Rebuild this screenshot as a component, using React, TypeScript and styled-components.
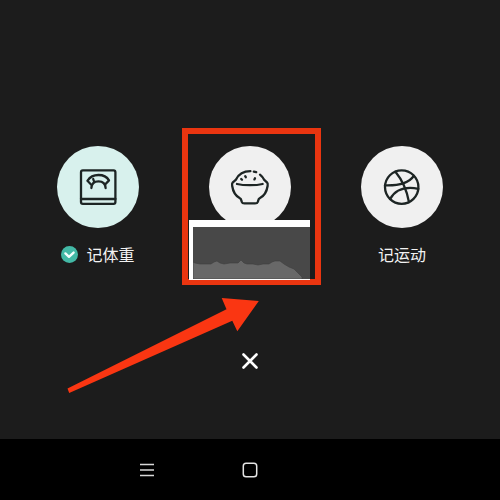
import React from "react";
import styled, { createGlobalStyle } from "styled-components";

const GlobalStyle = createGlobalStyle`
  * { box-sizing: border-box; }
  body {
    margin: 0;
    background: #1c1c1c;
    font-family: "Noto Sans CJK SC", "Noto Sans", sans-serif;
  }
  button {
    margin: 0;
    padding: 0;
    border: 0;
    background: none;
    color: inherit;
    font: inherit;
    cursor: pointer;
  }
  svg { display: block; }
`;

const Screen = styled.div`
  display: flex;
  flex-direction: column;
  min-height: 100vh;
  background: #1c1c1c;
  color: #f2f2f2;
`;

const Content = styled.main`
  flex: 1;
  display: flex;
  flex-direction: column;
  align-items: center;
  gap: 80px;
  padding: 146px 22px 60px;
`;

const Actions = styled.div`
  position: relative;
  display: grid;
  grid-template-columns: repeat(3, 1fr);
  width: 100%;
`;

const Slot = styled.div`
  position: relative;
  display: flex;
  justify-content: center;
  align-items: flex-start;
`;

const Action = styled.button`
  display: flex;
  flex-direction: column;
  align-items: center;
  gap: 14px;
`;

const Disc = styled.span<{ $tint: string }>`
  display: flex;
  align-items: center;
  justify-content: center;
  width: 82px;
  height: 82px;
  border-radius: 50%;
  background: ${(p) => p.$tint};
`;

const Label = styled.span`
  display: flex;
  align-items: center;
  gap: 8px;
  font-size: 16px;
  line-height: 24px;
  white-space: nowrap;
`;

const Highlight = styled.div`
  position: absolute;
  top: -18px;
  left: calc(50% - 68px);
  width: 139px;
  height: 157px;
  border: 6px solid #ea3510;
`;

const Preview = styled.div`
  position: absolute;
  top: 74px;
  left: calc(50% - 61px);
  width: 121px;
  height: 60px;
  padding: 7px 0 1px 4px;
  background: #ffffff;
`;

const Pointer = styled.svg`
  position: absolute;
  top: 151px;
  left: calc(50% - 184px);
  pointer-events: none;
`;

const CloseButton = styled.button`
  display: flex;
  align-items: center;
  justify-content: center;
  width: 30px;
  height: 30px;
  color: #ffffff;
`;

const NavBar = styled.nav`
  display: flex;
  justify-content: center;
  height: 61px;
  background: #000000;
`;

const NavKeys = styled.div`
  display: grid;
  grid-template-columns: repeat(3, 1fr);
  width: 62%;
`;

const NavKey = styled.button`
  display: flex;
  align-items: center;
  justify-content: center;
`;

const iconProps = {
  width: 40,
  height: 40,
  viewBox: "0 0 40 40",
  fill: "none",
  stroke: "#1d2524",
  strokeWidth: 2.3,
  strokeLinecap: "round" as const,
  strokeLinejoin: "round" as const,
  "aria-hidden": true,
};

const ScaleIcon = () => (
  <svg {...iconProps}>
    <rect x="3" y="3.4" width="34.4" height="33.4" rx="1.8" />
    <path d="M3 32H37.4" />
    <path d="M12.8 17.2L9.4 13.8C12 9.8 16 8 20.5 8S28.8 9.6 31 13.4L27.6 17" />
    <path d="M13.4 21C13.5 16.6 16 14.3 20.5 14.3S27.4 16.6 27.6 21M15.2 12L16.2 15" />
  </svg>
);

const BowlIcon = () => (
  <svg {...iconProps}>
    <path d="M20.4 4.2C14 4.2 8.6 7.2 6 12.6L2.6 15.6C1.8 16.4 2 17.6 2.2 19C3 24.4 5.6 28.8 9.6 31C11.6 32 11.2 33.2 11.8 35C12.2 36.2 13 36.4 14.4 36.4H25C26.6 36.4 27.4 36.2 27.8 35C28.4 33.2 28 32 30 31C34.2 28.8 36.8 24.4 37.6 19C37.8 17.6 38 16.4 37.2 15.6L34 12.6C33 10.6 31.8 9 30 7.6" />
    <path d="M23.8 4.6L26.2 5.2" />
    <path d="M7 17C14 18.6 26 18.6 32.6 17" />
    <path d="M15.2 9.2L15.8 10.2M11.2 12L12 12.8M25 11.2L24.4 12.4" />
  </svg>
);

const BallIcon = () => (
  <svg {...iconProps}>
    <circle cx="19.7" cy="20.1" r="16.7" />
    <path d="M13.4 4.8C19.4 12 24.4 21 27 35.2" />
    <path d="M2.9 18.4C15.5 18.8 26 17 31.8 9" />
    <path d="M8.2 32C13.2 22.8 22.6 19.2 36.4 21.8" />
  </svg>
);

const CheckIcon = () => (
  <svg width="17" height="17" viewBox="0 0 17 17" aria-hidden>
    <circle cx="8.5" cy="8.5" r="8.5" fill="#43b9a6" />
    <path
      d="M4.4 7.4L8 10.8L12.6 6.6"
      fill="none"
      stroke="#f4fffd"
      strokeWidth="2.4"
      strokeLinecap="round"
      strokeLinejoin="round"
    />
  </svg>
);

const AreaChart = () => (
  <svg width="100%" height="100%" viewBox="0 0 117 52" preserveAspectRatio="none" aria-hidden>
    <rect width="117" height="52" fill="#484848" />
    <path
      d="M0 35L2 36L7 37L14 37L18 37L21 35L24 34L27 36L31 37L37 36L45 36L48 33L51 36L54 37L60 37L65 38L70 37L76 37L79 35L82 34L87 34L91 37L96 40L101 42L104 45L107 48L109 50V52H0Z"
      fill="#686868"
      stroke="#3e3e3e"
      strokeWidth="0.6"
    />
  </svg>
);

export default function App() {
  return (
    <Screen>
      <GlobalStyle />
      <Content>
        <Actions>
          <Slot>
            <Action>
              <Disc $tint="#d8f1ed"><ScaleIcon /></Disc>
              <Label><CheckIcon />记体重</Label>
            </Action>
          </Slot>
          <Slot>
            <Action aria-label="记饮食">
              <Disc $tint="#f0f0f0"><BowlIcon /></Disc>
            </Action>
            <Highlight />
            <Preview><AreaChart /></Preview>
          </Slot>
          <Slot>
            <Action>
              <Disc $tint="#f0f0f0"><BallIcon /></Disc>
              <Label>记运动</Label>
            </Action>
          </Slot>
          <Pointer width="194" height="98" viewBox="0 0 194 98" aria-hidden>
            <path
              d="M1.5 91.5L160.5 12.3L155.7 1L192.8 4L171.3 34.3L166.3 23.7L3.2 96Z"
              fill="#fa3612"
            />
          </Pointer>
        </Actions>
        <CloseButton aria-label="关闭">
          <svg width="16" height="16" viewBox="0 0 16 16" aria-hidden>
            <path d="M1.5 1.5L14.5 14.5M14.5 1.5L1.5 14.5" stroke="currentColor" strokeWidth="2.6" strokeLinecap="round" />
          </svg>
        </CloseButton>
      </Content>
      <NavBar>
        <NavKeys>
          <NavKey aria-label="菜单">
            <svg width="14" height="14" viewBox="0 0 14 14" aria-hidden>
              <path d="M0 1.5H14M0 7H14M0 12.5H14" stroke="#d8d8d8" strokeWidth="1.5" />
            </svg>
          </NavKey>
          <NavKey aria-label="主页">
            <svg width="16" height="16" viewBox="0 0 16 16" aria-hidden>
              <rect x="1.3" y="1.3" width="13.4" height="13.4" rx="2.8" fill="none" stroke="#e4e4e4" strokeWidth="1.5" />
            </svg>
          </NavKey>
        </NavKeys>
      </NavBar>
    </Screen>
  );
}
